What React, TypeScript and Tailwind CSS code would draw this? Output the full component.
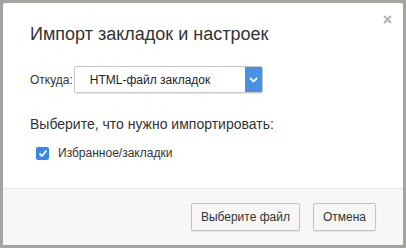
import React from 'react';

const font = { fontFamily: '"Segoe UI", "Liberation Sans", Arial, sans-serif' };

export default function App() {
  return (
    <div className="w-[406px] h-[248px] bg-[#a3a3a0] p-[3px]" style={font}>
      <div className="flex h-full flex-col rounded-[2px] bg-white">
        <div className="relative flex-1 px-[27px] pt-[19px]">
          <button className="absolute right-[11px] top-[9px] text-[16px] font-bold leading-none text-[#b0b0b0]">×</button>
          <h1 className="text-[18px] leading-[24px] text-[#333]">Импорт закладок и настроек</h1>
          <div className="mt-[20px] flex items-center gap-[1px]">
            <span className="text-[12px] text-[#333]">Откуда:</span>
            <div className="flex h-[27px] w-[189px] items-stretch overflow-hidden rounded-[2px] border border-[#c8c8c8] shadow-[0_1px_1px_rgba(0,0,0,0.1)]">
              <div className="flex flex-1 items-center pl-[15px] text-[12px] text-[#222]">HTML-файл закладок</div>
              <div className="flex w-[17px] items-center justify-center bg-[#4a90e2]">
                <svg width="9" height="6" viewBox="0 0 9 6" fill="none">
                  <path d="M1 1l3.5 3.5L8 1" stroke="white" strokeWidth="1.8" />
                </svg>
              </div>
            </div>
          </div>
          <p className="mt-[21px] text-[14px] leading-[20px] text-[#333]">Выберите, что нужно импортировать:</p>
          <label className="mt-[10px] flex items-center gap-[9px] pl-[6px]">
            <span className="flex h-[13px] w-[13px] items-center justify-center rounded-[2px] bg-[#3b86e0]">
              <svg width="10" height="9" viewBox="0 0 10 9" fill="none">
                <path d="M1.5 4.5l2.5 2.5L8.5 1.5" stroke="white" strokeWidth="1.8" />
              </svg>
            </span>
            <span className="text-[12px] text-[#333]">Избранное/закладки</span>
          </label>
        </div>
        <div className="flex h-[57px] items-center justify-end gap-[13px] border-t border-[#e6e6e6] bg-[#f7f7f7] pr-[27px]">
          <button className="h-[28px] rounded-[2px] border border-[#c4c4c4] bg-[#f6f6f6] px-[9px] text-[12px] text-[#333] shadow-[0_1px_1px_rgba(0,0,0,0.08)]">Выберите файл</button>
          <button className="h-[28px] rounded-[2px] border border-[#c4c4c4] bg-[#f6f6f6] px-[9px] text-[12px] text-[#333] shadow-[0_1px_1px_rgba(0,0,0,0.08)]">Отмена</button>
        </div>
      </div>
    </div>
  );
}
